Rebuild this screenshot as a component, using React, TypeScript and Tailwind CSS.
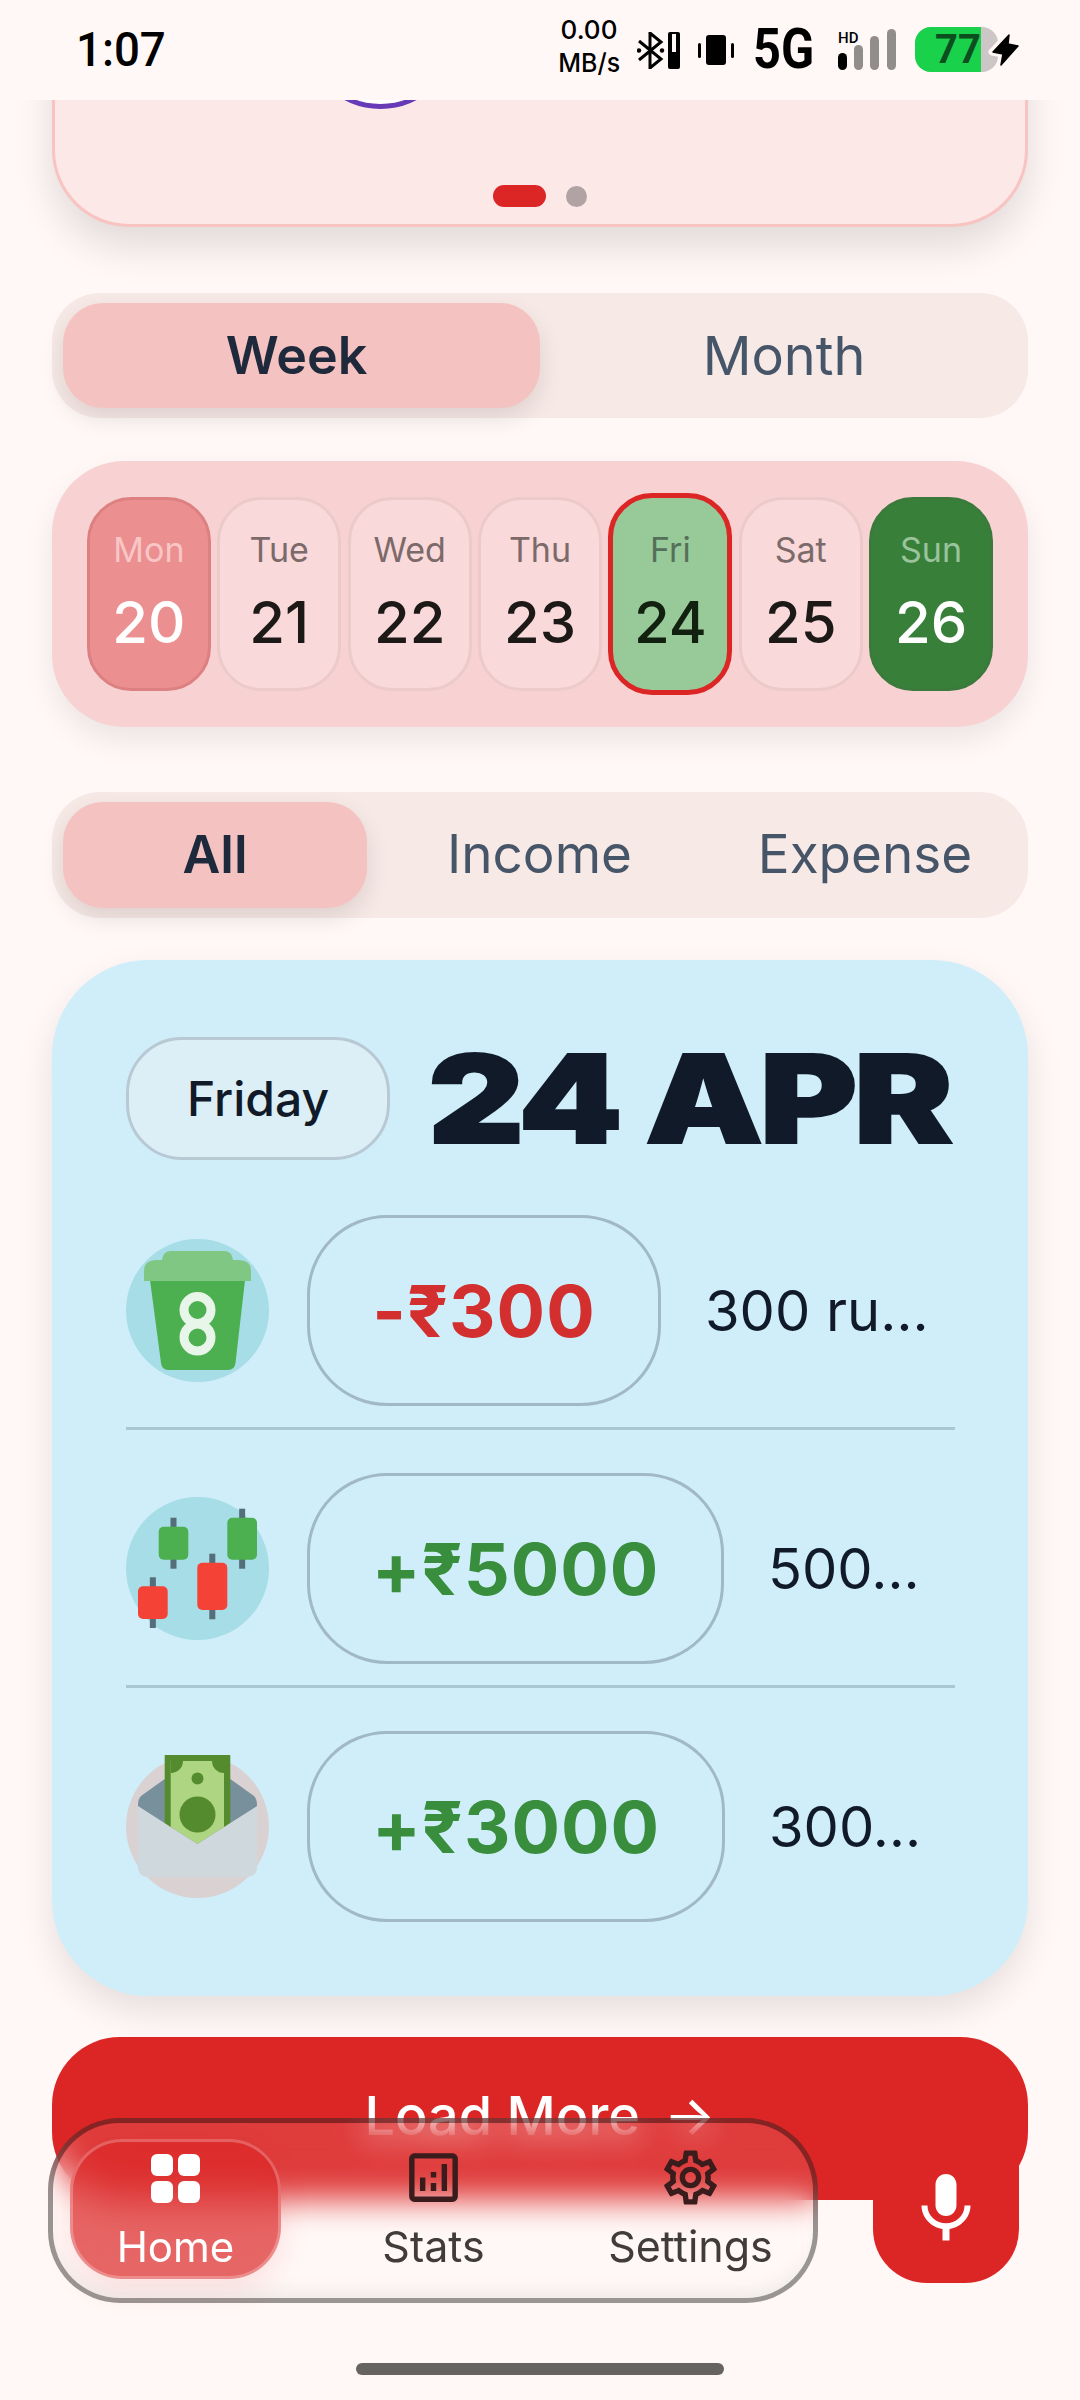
import React from "react";
import { MdOutlineAnalytics, MdOutlineSettings, MdMic } from "react-icons/md";

function CupIcon() {
  return (
    <svg viewBox="0 0 143 143" className="w-[143px] h-[143px] shrink-0 overflow-visible">
      <circle cx="71.5" cy="71.5" r="71.5" fill="#a6dde7" />
      <path d="M24 41 L119 41 L109.500 124 Q108.500 131 102 131 L42 131 Q36 131 35 124 Z" fill="#4caf50" />
      <path d="M18 42 L18 32 Q18 21 31 21 L36 21 Q37 12 45 12 L98 12 Q106 12 107 21 L112 21 Q125 21 125 32 L125 42 Z" fill="#81c784" />
      <circle cx="71.500" cy="71" r="13.500" fill="none" stroke="#e8f5e9" strokeWidth="9" />
      <circle cx="71.500" cy="98.500" r="13.500" fill="none" stroke="#e8f5e9" strokeWidth="9" />
    </svg>
  );
}

function CandleIcon() {
  const c = [
    { x: 32.7, y: 29.7, w: 29.6, h: 33, wy: 20.7, wh: 51, f: "#4caf50" },
    { x: 101.3, y: 20.7, w: 29.7, h: 42, wy: 11.7, wh: 60, f: "#4caf50" },
    { x: 71.3, y: 65.7, w: 30, h: 47.3, wy: 56.7, wh: 65.6, f: "#f44336" },
    { x: 12, y: 89.3, w: 29.7, h: 32.7, wy: 80.3, wh: 50.7, f: "#f44336" },
  ];
  return (
    <svg viewBox="0 0 143 143" className="w-[143px] h-[143px] shrink-0 overflow-visible">
      <circle cx="71.5" cy="71.5" r="71.5" fill="#a6dde7" />
      {c.map((k, i) => (
        <g key={i}>
          <rect x={k.x + k.w / 2 - 3} y={k.wy} width="6" height={k.wh} fill="#546e7a" />
          <rect x={k.x} y={k.y} width={k.w} height={k.h} rx="5" fill={k.f} />
        </g>
      ))}
    </svg>
  );
}

function EnvelopeIcon() {
  return (
    <svg viewBox="0 0 143 143" className="w-[143px] h-[143px] shrink-0 overflow-visible">
      <circle cx="71.5" cy="71.5" r="71.5" fill="#dad2d2" />
      <path d="M38.700 24 L104.300 24 L128 41 Q131 44 131 50 L131 56 L71.500 95 L12 56 L12 50 Q12 44 15 41 Z" fill="#78909c" />
      <rect x="38.700" y="0" width="65.600" height="74" fill="#558b2f" />
      <path d="M44.700 6 L98 6 L98 72 L71.500 89 L44.700 72 Z" fill="#aed581" />
      <path d="M44.700 6 L57 6 A12 12 0 0 1 44.700 18 Z" fill="#558b2f" />
      <path d="M98 6 L86 6 A12 12 0 0 0 98 18 Z" fill="#558b2f" />
      <circle cx="71.500" cy="23.500" r="6" fill="#558b2f" />
      <circle cx="71.500" cy="59.500" r="18" fill="#558b2f" />
      <path d="M12 51 L44.700 72 L71.500 89 L98 72 L131 51 L131 112 Q131 122 120 122 L23 122 Q12 122 12 112 Z" fill="#cfd8dc" />
    </svg>
  );
}

function StatusBar() {
  return (
    <div className="relative z-10 h-[100px] bg-[#fff8f6] flex items-start justify-between pl-[76px] pr-[61px] shrink-0 text-black">
      <div className="mt-[24px] origin-left scale-x-[0.95] text-[48px] leading-[52px] font-medium [font-family:Roboto,sans-serif]">1:07</div>
      <div className="flex items-start">
        <div className="w-[62px] mt-[13px] text-[26px] leading-[33px] font-medium text-center whitespace-nowrap flex flex-col items-center">
          <div>0.00</div>
          <div className="scale-x-[0.96]">MB/s</div>
        </div>
        <svg viewBox="0 0 43 37" className="w-[43px] h-[37px] mt-[32px] ml-[17px]">
          <path d="M2 9 L24 27 L13 36 L13 1 L24 10 L2 28" fill="none" stroke="#000" strokeWidth="3" />
          <circle cx="2" cy="18.500" r="2.200" fill="#000" />
          <circle cx="25" cy="18.500" r="2.200" fill="#000" />
          <rect x="31" y="0" width="12" height="37" rx="2" fill="#000" />
          <rect x="35" y="2" width="4" height="18" fill="#fff8f6" />
        </svg>
        <svg viewBox="0 0 36 30" className="w-[36px] h-[30px] ml-[18px] mt-[35px]">
          <rect x="8" y="0" width="20" height="30" rx="3" fill="#000" />
          <rect x="0" y="8" width="3" height="15" rx="1.500" fill="#000" />
          <rect x="33" y="8" width="3" height="15" rx="1.500" fill="#000" />
        </svg>
        <div className="ml-[19px] mt-[29px] w-[59px] origin-left scale-x-[0.87] whitespace-nowrap text-[56px] leading-[41px] font-bold [font-family:Roboto,sans-serif]">5G</div>
        <div className="relative ml-[26px] mt-[29px] w-[58px] h-[41px]">
          <span className="absolute left-0 top-[3px] text-[15px] leading-[12px] font-medium [font-family:Roboto,sans-serif]">HD</span>
          <svg viewBox="0 0 58 41" className="w-[58px] h-[41px]">
            <rect x="0" y="24" width="9" height="17" rx="4.500" fill="#000" />
            <rect x="16" y="16" width="9" height="25" rx="4.500" fill="#918d8b" />
            <rect x="32" y="7" width="9" height="34" rx="4.500" fill="#918d8b" />
            <rect x="49" y="0" width="9" height="41" rx="4.500" fill="#918d8b" />
          </svg>
        </div>
        <div className="ml-[19px] mt-[27px] w-[83px] h-[45px] rounded-[16px] bg-[#ccc7c6] overflow-hidden">
          <div className="w-[66px] h-full bg-[#1ad14c] flex items-center justify-center pl-[20px] text-[40px] leading-none font-bold text-[#0b4f20] [font-family:Roboto,sans-serif]">77</div>
        </div>
        <svg viewBox="0 0 27 32" className="relative w-[27px] h-[32px] -ml-[6px] mt-[34px] overflow-visible">
          <path d="M17 0 L0 18 L11 20 L9 32 L27 12 L16 10 Z" fill="none" stroke="#fff8f6" strokeWidth="7" strokeLinejoin="round" />
          <path d="M17 1 L1 18 L11 20 L9 31 L26 12 L16 10 Z" fill="#000" stroke="#000" strokeWidth="1.500" strokeLinejoin="round" />
        </svg>
      </div>
    </div>
  );
}

function TopCard() {
  return (
    <div className="relative -mt-[80px] h-[207px] rounded-b-[77px] rounded-t-none border-x-[3px] border-b-[3px] border-[#f8c4c2] bg-[#fde8e8] shadow-[0_20px_40px_rgba(0,0,0,0.12)] flex items-end justify-center gap-[20px] pb-[17px]">
      <div className="absolute left-[249px] top-[-64px] w-[153px] h-[153px] rounded-full border-[5px] border-[#673ab7] bg-white" />
      <div className="w-[53px] h-[22px] rounded-full bg-[#dc2626]" />
      <div className="w-[21px] h-[21px] rounded-full bg-[#b1a3a3]" />
    </div>
  );
}

function PeriodTabs() {
  return (
    <div className="mt-[66px] h-[125px] rounded-[48px] bg-[#f7e9e6] py-[10px] pl-[11px] pr-[10px] flex items-stretch">
      <div className="w-[477px] pr-[10px] rounded-[40px] bg-[#f5c2c2] shadow-[0_10px_24px_rgba(0,0,0,0.11)] flex items-center justify-center text-[52px] font-semibold text-[#1e293b]">Week</div>
      <div className="flex-1 pl-[10px] flex items-center justify-center text-[54px] font-normal text-[#475569]">Month</div>
    </div>
  );
}

const days = [
  { d: "Mon", n: "20", box: "h-[194px] pt-[29px] border-[3px] bg-[#eb8f90] border-[#dc8081]", l: "text-[#f8c6c6]", t: "text-white" },
  { d: "Tue", n: "21", box: "h-[194px] pt-[29px] border-[3px] bg-[#f9d9d9] border-[#eccaca]", l: "text-[#7c6a6a]", t: "text-[#1c1917]" },
  { d: "Wed", n: "22", box: "h-[194px] pt-[29px] border-[3px] bg-[#f9d9d9] border-[#eccaca]", l: "text-[#7c6a6a]", t: "text-[#1c1917]" },
  { d: "Thu", n: "23", box: "h-[194px] pt-[29px] border-[3px] bg-[#f9d9d9] border-[#eccaca]", l: "text-[#7c6a6a]", t: "text-[#1c1917]" },
  { d: "Fri", n: "24", box: "h-[202px] pt-[31px] border-[5px] bg-[#97ca98] border-[#dc2626]", l: "text-[#55705a]", t: "text-[#12200f]" },
  { d: "Sat", n: "25", box: "h-[194px] pt-[29px] border-[3px] bg-[#f9d9d9] border-[#eccaca]", l: "text-[#7c6a6a]", t: "text-[#1c1917]" },
  { d: "Sun", n: "26", box: "h-[194px] pt-[29px] border-[3px] bg-[#388039] border-[#3b7a3c]", l: "text-[#9bc39c]", t: "text-white" },
];

function Calendar() {
  return (
    <div className="mt-[43px] h-[266px] rounded-[72px] bg-[#f8d2d2] shadow-[0_14px_30px_rgba(0,0,0,0.08)] px-[35px] grid grid-cols-7 items-center gap-x-[6.500px]">
      {days.map((x) => (
        <div key={x.d} className={`rounded-[44px] flex flex-col items-center ${x.box}`}>
          <div className={`text-[34px] leading-[42px] ${x.l}`}>{x.d}</div>
          <div className={`mt-[16px] text-[58px] leading-[70px] font-medium ${x.t}`}>{x.n}</div>
        </div>
      ))}
    </div>
  );
}

function FilterTabs() {
  return (
    <div className="mt-[65px] h-[126px] rounded-[48px] bg-[#f7e9e6] py-[10px] pl-[11px] pr-[10px] flex items-stretch text-[53px]">
      <div className="w-[304px] rounded-[40px] bg-[#f5c2c2] shadow-[0_10px_24px_rgba(0,0,0,0.11)] flex items-center justify-center text-[52px] font-semibold text-[#1e293b]">All</div>
      <div className="w-[345px] flex items-center justify-center text-[#475569]">Income</div>
      <div className="flex-1 flex items-center justify-center text-[#475569]">Expense</div>
    </div>
  );
}

function Row({ icon, amount, color, pill, note }: { icon: React.ReactNode; amount: string; color: string; pill: string; note: string }) {
  return (
    <div className="flex items-center h-[191px]">
      {icon}
      <div className={`ml-[38px] h-full rounded-[80px] border-[3px] border-[#a1b9c5] flex items-center justify-center shrink-0 text-[72px] font-bold tracking-[1px] ${pill} ${color}`}>{amount}</div>
      <div className="ml-[44px] flex-1 text-[56px] text-[#111a28] whitespace-nowrap">{note}</div>
    </div>
  );
}

function MainCard() {
  return (
    <div className="mt-[42px] h-[1036px] rounded-[96px] bg-[#cfeefa] shadow-[0_16px_36px_rgba(0,0,0,0.1)] pl-[74px] pr-[73px] pt-[77px]">
      <div className="flex items-center h-[123px]">
        <div className="w-[264px] h-full rounded-[56px] border-[3px] border-[#b8c9d4] bg-[#dceff7] flex items-center justify-center text-[48px] font-medium text-[#111a28]">Friday</div>
        <div className="ml-[38px] origin-left scale-x-[1.22] whitespace-nowrap text-[122px] leading-[123px] font-black tracking-[-3px] text-[#111a28] [-webkit-text-stroke:2px_#111a28]">24 APR</div>
      </div>
      <div className="mt-[55px]">
        <Row icon={<CupIcon />} amount="-₹300" color="text-[#d32f2f]" pill="w-[354px]" note="300 ru…" />
        <div className="h-[3px] bg-[#aac6d3] mt-[21px] mb-[43px]" />
        <Row icon={<CandleIcon />} amount="+₹5000" color="text-[#388e3c]" pill="w-[417px]" note="500…" />
        <div className="h-[3px] bg-[#aac6d3] mt-[21px] mb-[43px]" />
        <Row icon={<EnvelopeIcon />} amount="+₹3000" color="text-[#388e3c]" pill="w-[418px]" note="300…" />
      </div>
    </div>
  );
}

function BottomNav() {
  return (
    <div className="absolute left-[48px] top-[2118px] w-[770px] h-[185px] flex items-center pl-[22px]">
      <div className="absolute inset-0 rounded-[72px] border-[5px] border-black/40 bg-white/10 backdrop-blur-lg shadow-[inset_0_-18px_20px_-12px_rgba(0,0,0,0.07)]" />
      <div className="relative w-[211px] h-[140px] -mt-[4px] rounded-[52px] border-[3px] border-white/25 bg-[#dc2626]/70 backdrop-blur-md shadow-[0_10px_30px_rgba(220,38,38,0.12)] flex flex-col items-center pt-[12px] text-white shrink-0">
        <svg viewBox="0 0 49 49" className="w-[49px] h-[49px]">
          <rect x="0" y="0" width="22" height="22" rx="6" fill="#fff" />
          <rect x="27" y="0" width="22" height="22" rx="6" fill="#fff" />
          <rect x="0" y="27" width="22" height="22" rx="6" fill="#fff" />
          <rect x="27" y="27" width="22" height="22" rx="6" fill="#fff" />
        </svg>
        <div className="mt-[20px] text-[42px] leading-[48px]">Home</div>
      </div>
      <div className="relative w-[257px] ml-[24px] mt-[1px] flex flex-col items-center text-[#403c3c] shrink-0">
        <MdOutlineAnalytics className="w-[65px] h-[65px] -my-[8px] text-[#3a1c1c]" />
        <div className="mt-[20px] text-[43px] leading-[48px]">Stats</div>
      </div>
      <div className="relative w-[257px] mt-[1px] flex flex-col items-center text-[#403c3c] shrink-0">
        <MdOutlineSettings className="w-[65px] h-[65px] -my-[8px] text-[#3a1c1c]" />
        <div className="mt-[20px] text-[43px] leading-[48px]">Settings</div>
      </div>
    </div>
  );
}

export default function App() {
  return (
    <div className="relative w-[1080px] h-[2400px] overflow-hidden bg-[#fff8f6] [font-family:Inter,sans-serif]">
      <StatusBar />
      <div className="px-[52px]">
        <TopCard />
        <PeriodTabs />
        <Calendar />
        <FilterTabs />
        <MainCard />
        <div className="mt-[41px] h-[163px] rounded-[68px] bg-[#dc2626] flex items-start justify-center pt-[48px] text-white text-[54px] leading-[62px] font-medium">
          Load More <span className="ml-[24px]">→</span>
        </div>
      </div>
      <div className="absolute left-[873px] top-[2135px] w-[146px] h-[148px] rounded-b-[54px] bg-[#dc2626] flex items-center justify-center">
        <MdMic className="w-[84px] h-[84px] text-white" />
      </div>
      <BottomNav />
      <div className="absolute left-[356px] top-[2363px] w-[368px] h-[12px] rounded-full bg-[#666461]" />
    </div>
  );
}
